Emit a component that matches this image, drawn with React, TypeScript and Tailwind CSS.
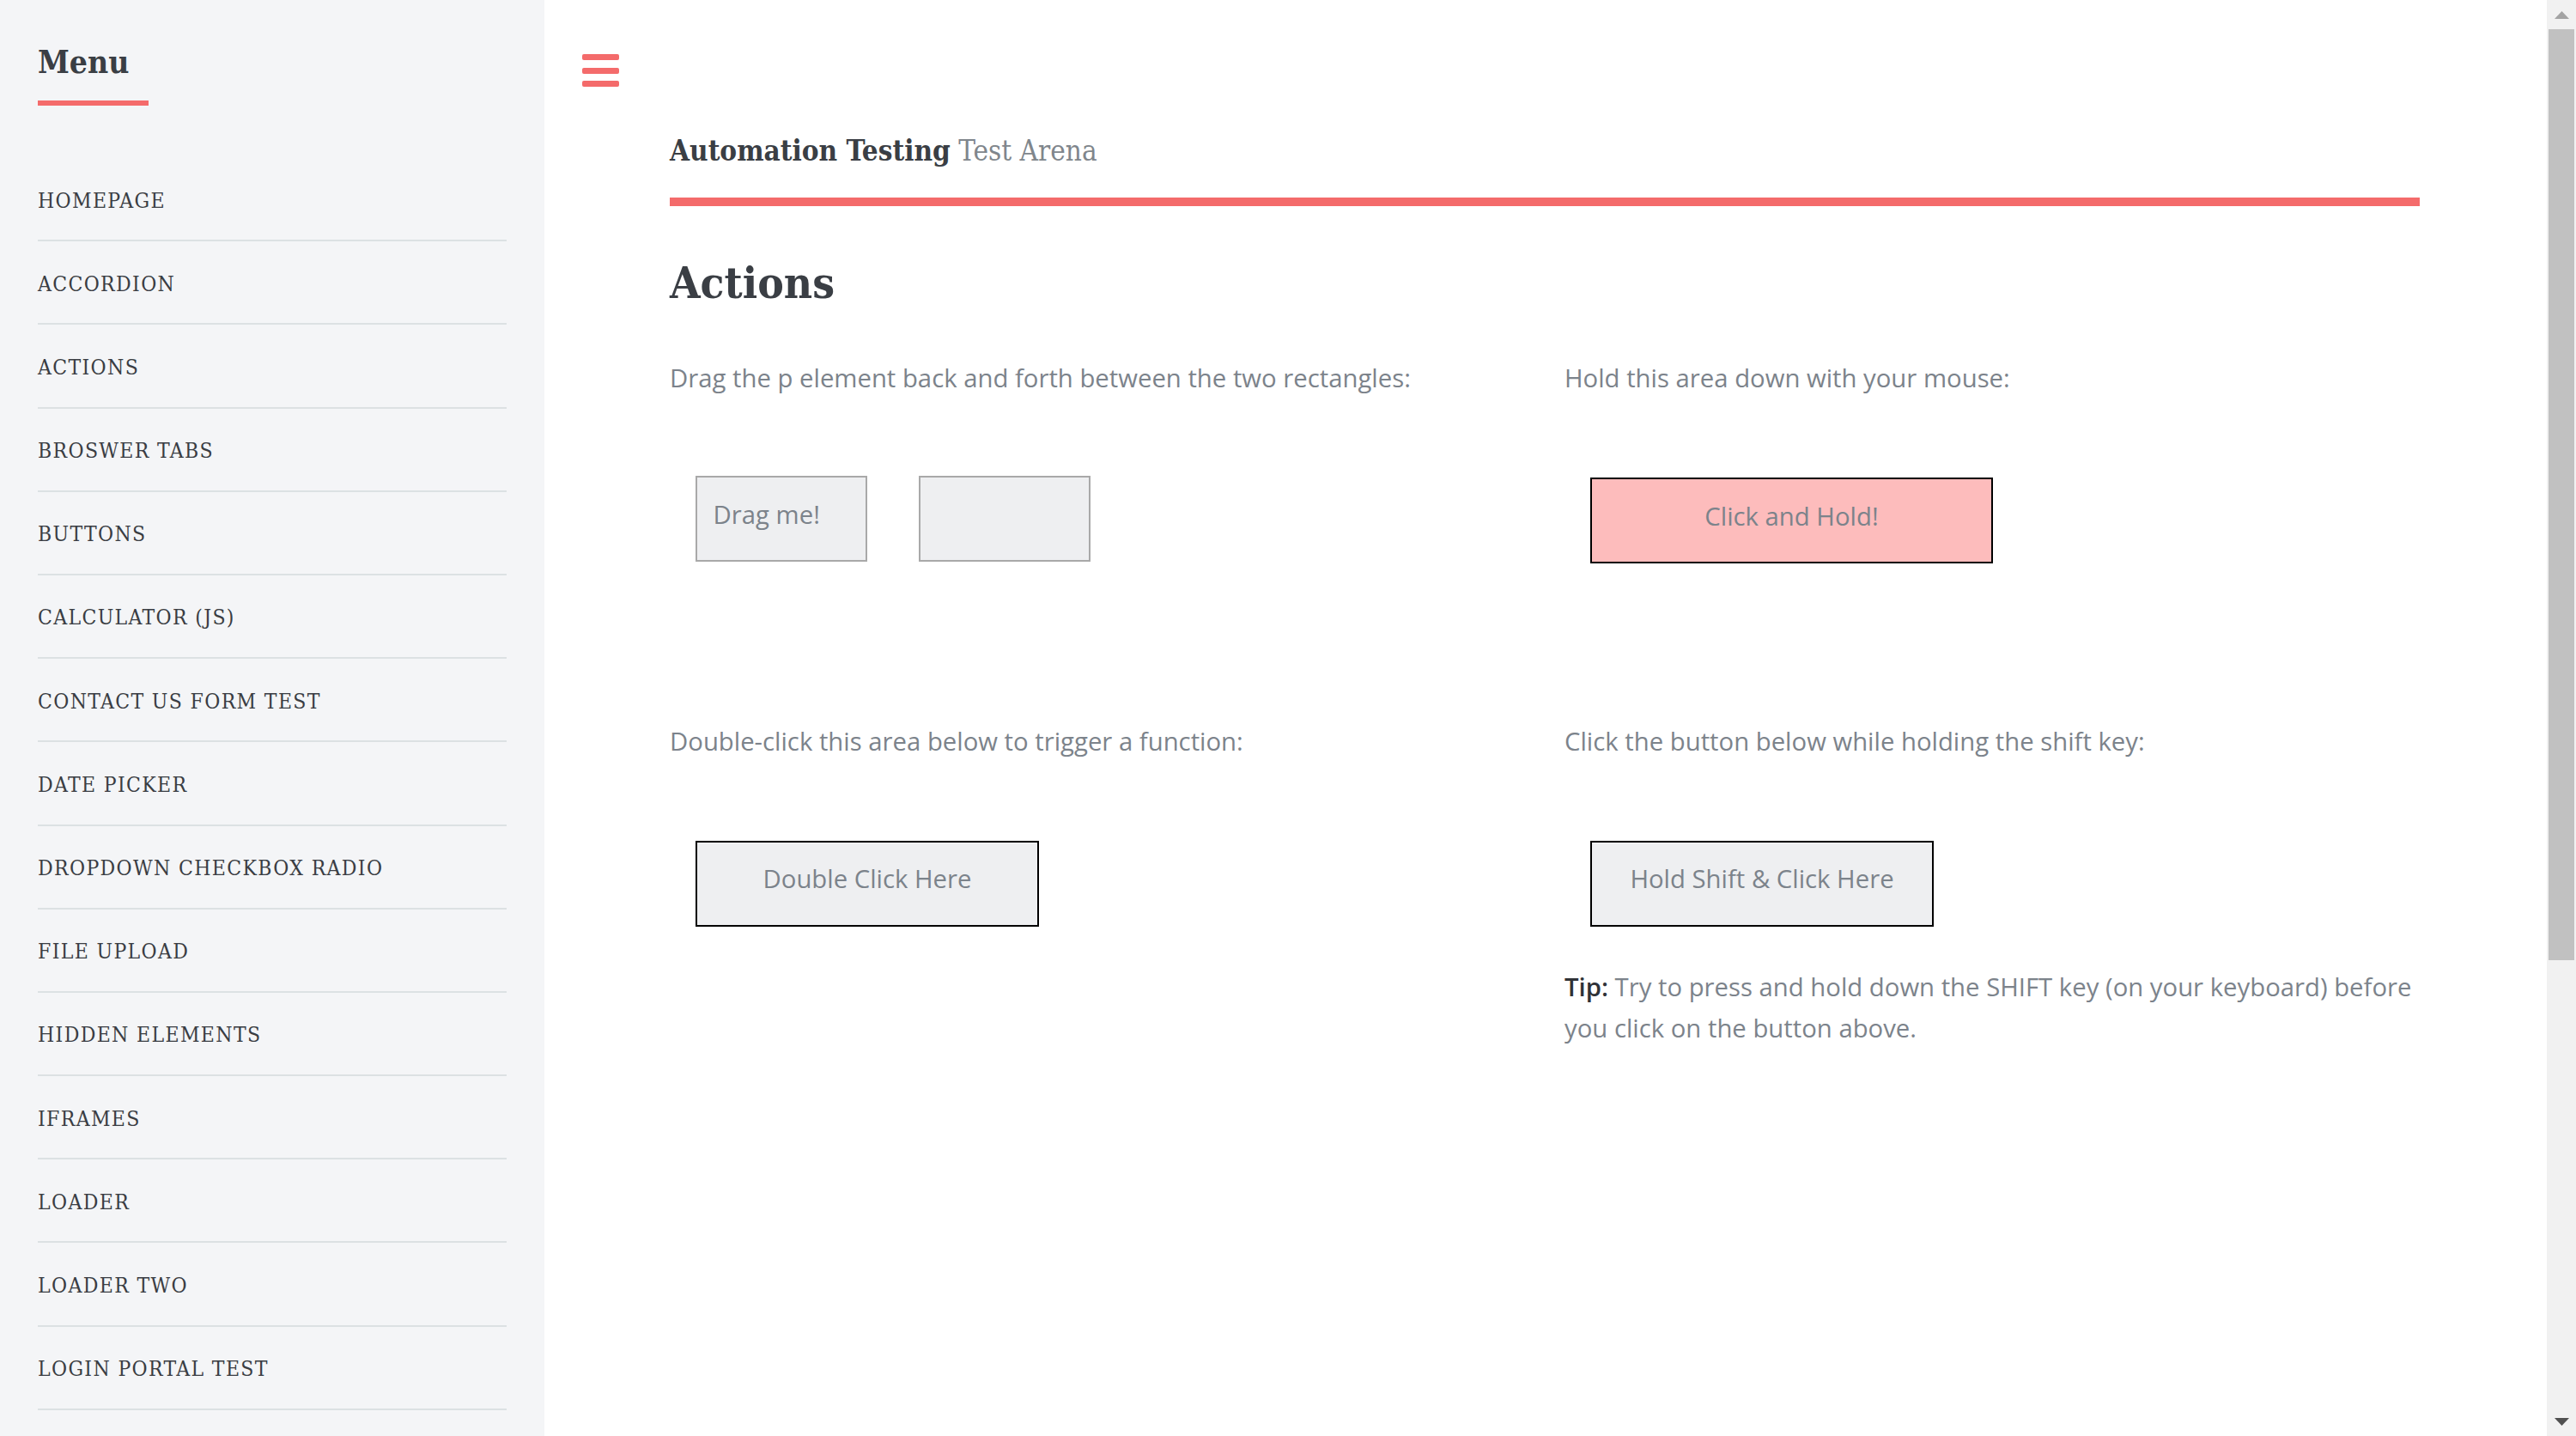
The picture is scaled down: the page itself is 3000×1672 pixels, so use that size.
import React from 'react';

const MENU = [
  'HOMEPAGE',
  'ACCORDION',
  'ACTIONS',
  'BROSWER TABS',
  'BUTTONS',
  'CALCULATOR (JS)',
  'CONTACT US FORM TEST',
  'DATE PICKER',
  'DROPDOWN CHECKBOX RADIO',
  'FILE UPLOAD',
  'HIDDEN ELEMENTS',
  'IFRAMES',
  'LOADER',
  'LOADER TWO',
  'LOGIN PORTAL TEST',
];

const slab = "font-['DejaVu_Serif_Condensed','DejaVu_Serif',serif]";
const body = "font-['Open_Sans',sans-serif]";

function Sidebar() {
  return (
    <aside className={`w-[634px] shrink-0 bg-[#f4f5f7] px-[44px] pt-[54px] ${slab}`}>
      <h2 className="text-[37px] font-bold leading-none text-[#3a3e44]">Menu</h2>
      <div className="mt-[26px] h-[6px] w-[129px] bg-[#f46b6b]" />
      <ul className="mt-[61px] w-[546px]">
        {MENU.map((m) => (
          <li
            key={m}
            className="box-border h-[97.2px] border-b-2 border-[#dce1e3] pt-[37.5px] text-[24.5px] leading-none tracking-[0.055em] text-[#3a3d43]"
          >
            {m}
          </li>
        ))}
      </ul>
    </aside>
  );
}

// fake browser scrollbar at the right edge
function Scrollbar() {
  return (
    <div className="flex w-[34px] shrink-0 flex-col bg-[#f1f1f1]">
      <div className="flex h-[34px] items-center justify-center">
        <svg width="17" height="9" viewBox="0 0 17 9">
          <path d="M8.5 0 L17 9 L0 9 Z" fill="#a3a3a3" />
        </svg>
      </div>
      <div className="mx-[2px] h-[1084px] bg-[#c1c1c1]" />
      <div className="flex-1" />
      <div className="flex h-[34px] items-center justify-center">
        <svg width="17" height="9" viewBox="0 0 17 9">
          <path d="M0 0 L17 0 L8.5 9 Z" fill="#505050" />
        </svg>
      </div>
    </div>
  );
}

const boxText = `box-border h-[100px] border-2 pt-[18.6px] text-[29.3px] leading-[48px] text-[#7c838b] ${body}`;

export default function App() {
  return (
    <div className="flex h-[1672px] w-[3000px] overflow-hidden bg-white">
      <Sidebar />
      <main className="min-w-0 flex-1 bg-white">
        <div className="ml-[44px] mt-[63px] flex w-[43px] flex-col gap-[8.5px]">
          <span className="h-[7px] rounded-[2px] bg-[#f46b6b]" />
          <span className="h-[7px] rounded-[2px] bg-[#f46b6b]" />
          <span className="h-[7px] rounded-[2px] bg-[#f46b6b]" />
        </div>

        <div className="ml-[146px] w-[2038px]">
          <div className={`mt-[58px] text-[33px] leading-none text-[#80868c] ${slab}`}>
            <span className="font-bold text-[#3a3e44]">Automation Testing</span> Test Arena
          </div>
          <div className="mt-[38px] h-[10px] bg-[#f46b6b]" />

          <h1 className={`mt-[64px] text-[51px] font-bold leading-none text-[#3a3e44] ${slab}`}>Actions</h1>

          <div className={`mt-[60.6px] grid grid-cols-2 gap-x-[46px] text-[29.3px] leading-[48px] text-[#7c838b] ${body}`}>
            {/* row 1 */}
            <div>
              <p>Drag the p element back and forth between the two rectangles:</p>
              <div className="ml-[30px] mt-[90.4px] flex gap-[60px]">
                <div className="box-border h-[100px] w-[200px] border-2 border-[#a9a9a9] bg-[#eeeff1] pl-[18.6px] pt-[18.6px]">
                  Drag me!
                </div>
                <div className="box-border h-[100px] w-[200px] border-2 border-[#a9a9a9] bg-[#eeeff1]" />
              </div>
            </div>
            <div>
              <p>Hold this area down with your mouse:</p>
              <div className={`ml-[30px] mt-[92.4px] w-[469px] border-black bg-[#fdbcbc] text-center ${boxText}`}>
                Click and Hold!
              </div>
            </div>

            {/* row 2 */}
            <div className="mt-[183.5px]">
              <p>Double-click this area below to trigger a function:</p>
              <div className={`ml-[30px] mt-[91.4px] w-[400px] border-black bg-[#eeeff1] text-center ${boxText}`}>
                Double Click Here
              </div>
            </div>
            <div className="mt-[183.5px]">
              <p>Click the button below while holding the shift key:</p>
              <div className={`ml-[30px] mt-[91.4px] w-[400px] border-black bg-[#eeeff1] text-center ${boxText}`}>
                Hold Shift &amp; Click Here
              </div>
              <p className="mt-[46.6px] whitespace-nowrap">
                <strong className="font-semibold text-[#2f3237]">Tip:</strong> Try to press and hold down the SHIFT key
                (on your keyboard) before
                <br />
                you click on the button above.
              </p>
            </div>
          </div>
        </div>
      </main>
      <Scrollbar />
    </div>
  );
}
